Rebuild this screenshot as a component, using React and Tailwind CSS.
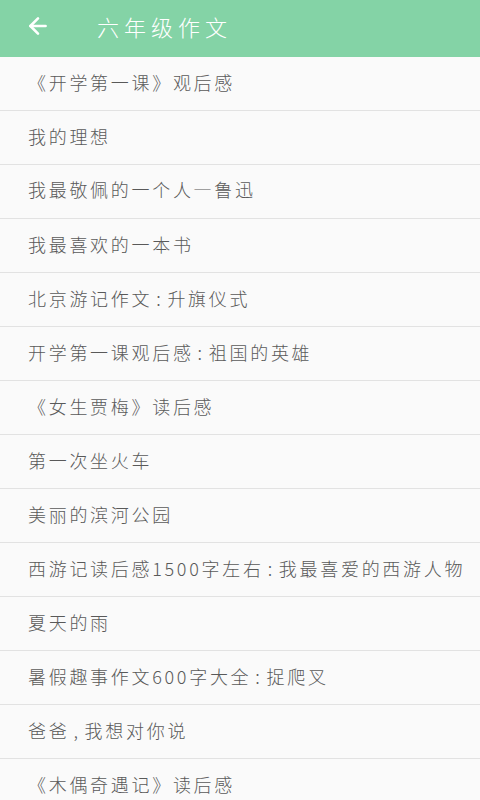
import { ArrowLeft } from "lucide-react";

const items = [
	"《开学第一课》观后感",
	"我的理想",
	"我最敬佩的一个人—鲁迅",
	"我最喜欢的一本书",
	"北京游记作文:升旗仪式",
	"开学第一课观后感:祖国的英雄",
	"《女生贾梅》读后感",
	"第一次坐火车",
	"美丽的滨河公园",
	"西游记读后感1500字左右:我最喜爱的西游人物",
	"夏天的雨",
	"暑假趣事作文600字大全:捉爬叉",
	"爸爸,我想对你说",
	"《木偶奇遇记》读后感",
];

// narrow punctuation sits with a little room on each side, like the app font
const Title = ({ text }) =>
	text.split(/([:,—])/).map((part, i) => {
		if (part === ":" || part === ",")
			return (
				<span key={i} className="px-[4px]">
					{part}
				</span>
			);
		if (part === "—")
			return (
				<span
					key={i}
					className="inline-block -translate-y-[3px]"
					style={{ fontFamily: '"DejaVu Sans", sans-serif' }}
				>
					{part}
				</span>
			);
		return <span key={i}>{part}</span>;
	});

const App = () => {
	return (
		<div
			className="w-[480px] h-[800px] overflow-hidden bg-[#fafafa]"
			style={{ fontFamily: '"Noto Sans CJK SC", "Noto Sans", sans-serif' }}
		>
			<div className="h-[57px] bg-[#84d3a6] flex items-center pb-[5px]">
				<ArrowLeft className="ml-[25px] w-[26px] h-[26px] text-white" strokeWidth={2.4} />
				<span className="ml-[46px] text-[22px] tracking-[5px] text-white font-light">六年级作文</span>
			</div>
			{items.map((item) => (
				<div key={item} className="h-[54px] flex items-center border-b border-[#e2e2e2] pl-[28px] pb-[3px]">
					<span className="text-[18px] tracking-[2.7px] text-[#595959] font-light whitespace-nowrap">
						<Title text={item} />
					</span>
				</div>
			))}
		</div>
	);
};

export default App;
